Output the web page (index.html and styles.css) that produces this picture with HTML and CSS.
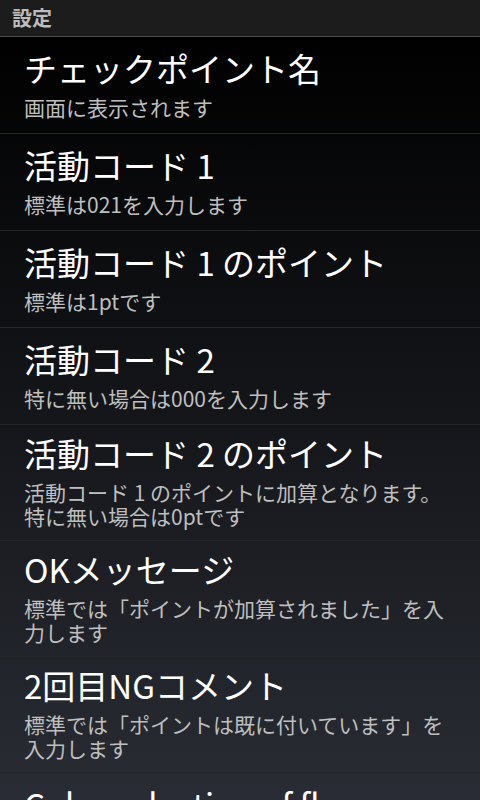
FILE: index.html
```html
<!DOCTYPE html>
<html lang="ja">
<head>
    <meta charset="UTF-8">
    <meta name="viewport" content="width=device-width, initial-scale=1.0">
    <title>設定</title>
    <link rel="stylesheet" href="styles.css">
</head>
<body>

    <div class="title-bar">設定</div>

    <div class="pref-list">
        <div class="pref">
            <div class="pref-title">チェックポイント名</div>
            <div class="pref-summary">画面に表示されます</div>
        </div>
        <div class="pref">
            <div class="pref-title">活動コード 1</div>
            <div class="pref-summary">標準は021を入力します</div>
        </div>
        <div class="pref">
            <div class="pref-title">活動コード 1 のポイント</div>
            <div class="pref-summary">標準は1ptです</div>
        </div>
        <div class="pref">
            <div class="pref-title">活動コード 2</div>
            <div class="pref-summary">特に無い場合は000を入力します</div>
        </div>
        <div class="pref">
            <div class="pref-title">活動コード 2 のポイント</div>
            <div class="pref-summary">活動コード 1 のポイントに加算となります。<br>特に無い場合は0ptです</div>
        </div>
        <div class="pref">
            <div class="pref-title">OKメッセージ</div>
            <div class="pref-summary">標準では「ポイントが加算されました」を入力します</div>
        </div>
        <div class="pref">
            <div class="pref-title">2回目NGコメント</div>
            <div class="pref-summary">標準では「ポイントは既に付いています」を入力します</div>
        </div>
        <div class="pref">
            <div class="pref-title">Color selection of flag</div>
            <div class="pref-summary">Select the color</div>
        </div>
    </div>

</body>
</html>
```

FILE: styles.css
```css
body, html {
    margin: 0;
    padding: 0;
    height: 100%;
    overflow: hidden;
    background: #000;
    font-family: "Noto Sans CJK JP", sans-serif;
}

.title-bar {
    height: 36px;
    line-height: 35px;
    padding-left: 12px;
    background: #1c1c1c;
    border-bottom: 1px solid #4e4e4e;
    color: #bdbdbd;
    font-size: 20px;
    font-weight: bold;
}

.pref-list {
    height: 763px;
    overflow: hidden;
    background: linear-gradient(#000, #292c34);
}

.pref {
    display: flex;
    flex-direction: column;
    justify-content: center;
    box-sizing: border-box;
    min-height: 97px;
    padding: 8px 24px 12px;
    border-bottom: 1px solid #25272b;
}

.pref-title {
    color: #fff;
    font-size: 33px;
    line-height: 40px;
    white-space: nowrap;
}

.pref-summary {
    margin-top: 7px;
    color: #bfbfbf;
    font-size: 21px;
    line-height: 24px;
}
```
